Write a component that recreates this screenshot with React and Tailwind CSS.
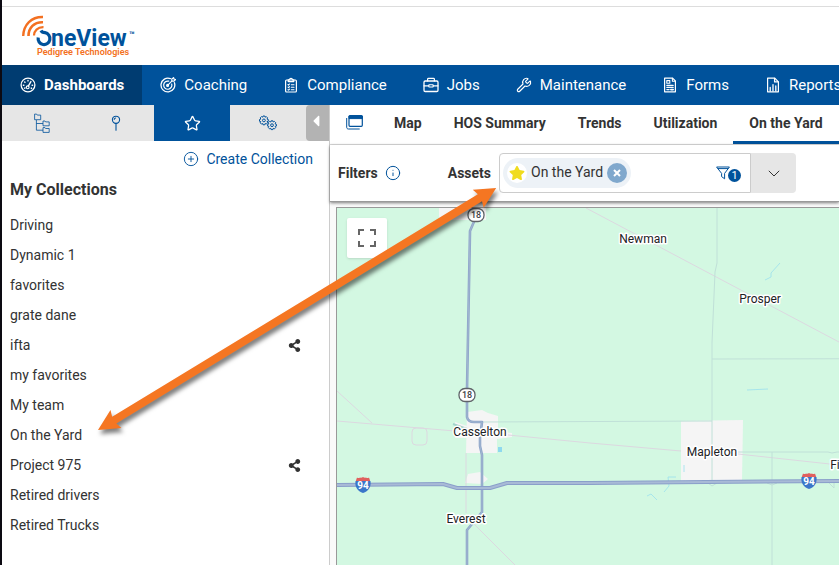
import React from 'react';
import { Star, Wrench, CirclePlus, Info } from 'lucide-react';
import { FaShareAlt, FaStar, FaCaretLeft } from 'react-icons/fa';

const Icon = ({ children, className = 'size-4' }) => (
    <svg viewBox="0 0 16 16" className={className} fill="none" stroke="currentColor" strokeWidth="1.1" strokeLinecap="round" strokeLinejoin="round" aria-hidden="true">
        {children}
    </svg>
);

const DashboardIcon = () => (
    <Icon>
        <circle cx="8" cy="8" r="6.9" strokeWidth="1.3" />
        <path d="M3.4 8.2h.5M4.7 4.9l.3.3M8 3.4v.5M12.1 8.2h.5M4.6 11.2l.4-.3M11.2 11.1l.4.3" strokeWidth="1.4" />
        <path d="M8.3 9.2l2.6-4.6" strokeWidth="1.4" />
        <circle cx="7.7" cy="10.3" r="1.4" />
    </Icon>
);

const CoachingIcon = () => (
    <Icon>
        <path d="M14.4 5.7a6.9 6.9 0 1 1-4-4.1" strokeWidth="1.3" />
        <path d="M11.7 7a4.1 4.1 0 1 1-2.9-2.8" strokeWidth="1.2" />
        <path d="M7.6 8.4l4.2-4.2M11.8 4.2V2l1.8-1.4.4 1.5 1.5.4L14 4.2z" strokeWidth="1.2" />
        <circle cx="7.6" cy="8.4" r="1" />
    </Icon>
);

const ComplianceIcon = () => (
    <Icon>
        <rect x="2.6" y="3" width="10.8" height="12" rx="1" strokeWidth="1.2" />
        <path d="M5.2 4.6V2.8h1.4a1.4 1.4 0 0 1 2.8 0h1.4v1.8z" strokeWidth="1.2" />
        <path d="M5 7.5l.6.6.9-1.1M8.3 7.7H11M5 10.1l.6.6.9-1.1M8.3 10.2H11M5 12.7l.6.4.9-.9M8.3 12.7H11" />
    </Icon>
);

const JobsIcon = () => (
    <Icon>
        <rect x="1" y="4" width="14" height="10.5" rx="1.2" strokeWidth="1.3" />
        <path d="M4.6 4V2.2c0-.5.4-.8.9-.8h5c.5 0 .9.3.9.8V4M1 8.8h4.8M10.2 8.8H15" strokeWidth="1.2" />
        <rect x="5.8" y="7.8" width="4.4" height="2.2" rx=".4" />
    </Icon>
);

const FormsIcon = () => (
    <Icon>
        <path d="M2.6 1.2h8l2.8 2.8v10.8H2.6z" strokeWidth="1.2" />
        <path d="M10.4 1.4v2.8h2.8M4.8 3.6h3v2.6h-3zM4.8 8.4h6.4M4.8 10.4h6.4M4.8 12.6h2.4" />
        <path d="M8.8 12.6h2.4" strokeWidth="1.6" />
    </Icon>
);

const ReportsIcon = () => (
    <Icon>
        <path d="M2.6 1.2h7.2l3.6 3.6v10H2.6z" strokeWidth="1.2" />
        <path d="M9.6 1.4v3.5h3.6M5.2 14v-3.6M8 14V7.6M10.8 14V9" strokeWidth="1.3" />
    </Icon>
);

const HierarchyIcon = () => (
    <svg viewBox="0 0 16 20" className="ml-1 h-5 w-4" fill="none" stroke="currentColor" strokeWidth="0.8" aria-hidden="true">
        <path d="M.6 1.1h2l.7 1h3.4v4.6H.6zM9 8h2l.6.9h3.6v3.9H9zM9 14.6h2l.6.9h3.6v3.9H9zM2.4 7v10.2H9M2.4 10.5H9" />
    </svg>
);

const PinIcon = () => (
    <Icon>
        <circle cx="8" cy="4.8" r="3.6" />
        <path d="M8 8.6v6.6M6.2 4.4c.1-.8.6-1.2 1.4-1.4" />
    </Icon>
);

const Gear = ({ x, y }) => (
    <g transform={`translate(${x} ${y})`}>
        <path d="M-.9-4.4h1.8l.3 1.2 1.2-.6 1.3 1.3-.6 1.2 1.3.4v1.8l-1.3.3.6 1.2-1.3 1.3-1.2-.6-.3 1.3H-.9l-.3-1.3-1.2.6-1.3-1.3.6-1.2-1.3-.3V-.9l1.3-.4-.6-1.2 1.3-1.3 1.2.6z" />
        <circle r="1.4" />
    </g>
);

const GearsIcon = () => (
    <svg viewBox="0 0 18 16" className="h-4 w-[18px]" fill="none" stroke="currentColor" strokeWidth="1" aria-hidden="true">
        <Gear x={4.9} y={5.4} />
        <Gear x={13} y={10.2} />
    </svg>
);

const Logo = () => (
    <svg viewBox="0 0 118 42" className="h-[42px] w-[118px]" role="img" aria-label="OneView Pedigree Technologies">
        <g fill="none" stroke="#f37021">
            <path d="M1.2 21C1.6 9.6 9.4 1.7 21 2" strokeWidth="2.4" />
            <path d="M6.5 21C6.5 13 12 6.8 21 7.2" strokeWidth="2.6" />
            <path d="M12 20.5C12 16 15.5 12 21.500 12.200" strokeWidth="2.2" />
        </g>
        <path d="M16.200 22.500A5.900 6 0 1 0 23 17.700C20.500 17.500 19.500 16.500 19 15.500" fill="none" stroke="#00529b" strokeWidth="3.2" />
        <text x="29" y="31" fontSize="23" fontWeight="700" fill="#00529b" className="font-['Roboto',sans-serif]">neView</text>
        <text x="107" y="23" fontSize="9" fontWeight="700" fill="#00529b" className="font-['Roboto',sans-serif]">™</text>
        <text x="15" y="40" fontSize="9" fontWeight="600" fill="#f37021" className="font-['Roboto',sans-serif]">Pedigree Technologies</text>
    </svg>
);

const navItems = [
    { label: 'Dashboards', icon: <DashboardIcon />, active: true },
    { label: 'Coaching', icon: <CoachingIcon /> },
    { label: 'Compliance', icon: <ComplianceIcon /> },
    { label: 'Jobs', icon: <JobsIcon /> },
    { label: 'Maintenance', icon: <Wrench className="size-4" strokeWidth={1.7} /> },
    { label: 'Forms', icon: <FormsIcon /> },
    { label: 'Reports', icon: <ReportsIcon /> },
];

const Navbar = () => (
    <nav className="flex h-10 overflow-hidden bg-[#00529b] text-white">
        {navItems.map(({ label, icon, active }) => (
            <a
                key={label}
                href="#"
                className={active
                    ? 'flex shrink-0 items-center gap-2 bg-[#003c71] px-[18px] text-[15px] font-bold'
                    : 'flex shrink-0 items-center gap-2 px-[18px] text-[15px]'}
            >
                {icon}
                {label}
            </a>
        ))}
    </nav>
);

const sideTabs = [
    { label: 'Hierarchy', icon: <HierarchyIcon /> },
    { label: 'Landmarks', icon: <PinIcon /> },
    { label: 'Collections', icon: <Star className="size-[17px]" strokeWidth={1.8} />, active: true },
    { label: 'Settings', icon: <GearsIcon /> },
];

const collections = [
    { name: 'Driving' },
    { name: 'Dynamic 1' },
    { name: 'favorites' },
    { name: 'grate dane' },
    { name: 'ifta', shared: true },
    { name: 'my favorites' },
    { name: 'My team' },
    { name: 'On the Yard' },
    { name: 'Project 975', shared: true },
    { name: 'Retired drivers' },
    { name: 'Retired Trucks' },
];

const Sidebar = () => (
    <aside className="w-[328px] shrink-0 border-r border-[#ccc]">
        <div className="flex h-9 bg-[#e6e6e6]">
            {sideTabs.map(({ label, icon, active }) => (
                <button
                    key={label}
                    type="button"
                    aria-label={label}
                    className={active
                        ? 'flex flex-1 items-center justify-center bg-[#00529b] text-white'
                        : 'flex flex-1 items-center justify-center text-[#00529b]'}
                >
                    {icon}
                </button>
            ))}
            <button type="button" aria-label="Collapse panel" className="flex w-[23px] items-center justify-center rounded-l-sm bg-[#b3b3b3] pr-1 pb-1 text-white">
                <FaCaretLeft className="size-[18px]" />
            </button>
        </div>
        <div className="flex justify-end px-4 pt-2">
            <button type="button" className="flex items-center gap-[7px] text-sm text-[#00529b]">
                <CirclePlus className="size-4" strokeWidth={1.4} />
                Create Collection
            </button>
        </div>
        <h2 className="px-2 pt-[9px] text-base font-bold">My Collections</h2>
        <ul className="px-2 pt-2">
            {collections.map(({ name, shared }) => (
                <li key={name} className="flex h-[30px] items-center justify-between pr-5 text-sm">
                    <a href="#">{name}</a>
                    {shared && <FaShareAlt className="size-[13px]" aria-label="Shared" />}
                </li>
            ))}
        </ul>
    </aside>
);

const viewTabs = ['Map', 'HOS Summary', 'Trends', 'Utilization', 'On the Yard'];

const ViewTabs = () => (
    <div className="flex h-10 overflow-hidden border-b border-[#ddd] text-sm font-bold">
        <button type="button" aria-label="Open in new window" className="flex w-12 shrink-0 items-center justify-center pb-1 text-[#00529b]">
            <svg viewBox="0 0 17 15" className="h-[15px] w-[17px]" fill="none" stroke="currentColor" aria-hidden="true">
                <rect x="3" y=".7" width="13.300" height="10.600" rx="1" strokeWidth="1.200" />
                <path d="M3 1h13.300v2.600H3z" fill="currentColor" />
                <path d="M.7 3v9.300c0 1 .6 1.700 1.700 1.700h11.300" strokeWidth="1" />
            </svg>
        </button>
        {viewTabs.map((tab) => (
            <a
                key={tab}
                href="#"
                className={tab === 'On the Yard'
                    ? 'shrink-0 border-b-[3px] border-[#00529b] px-4 pt-2'
                    : 'shrink-0 px-4 pt-2'}
            >
                {tab}
            </a>
        ))}
        <span className="flex-1 border-b-[3px] border-[#00529b]" />
    </div>
);

const FilterBar = () => (
    <div className="relative flex h-[57px] items-center border-b border-[#999] bg-white px-2 text-sm shadow-[0_1px_3px_rgba(0,0,0,0.5)]">
        <span className="font-bold">Filters</span>
        <button type="button" aria-label="About filters" className="ml-[7px] text-[#00529b]">
            <Info className="size-4" strokeWidth={1.5} />
        </button>
        <span className="mr-2 ml-[47px] font-bold">Assets</span>
        <div className="flex h-10 w-[252px] items-center justify-between rounded-l-sm border border-[#ccc] pr-1 pl-[3px]">
            <span className="flex h-[30px] items-center gap-1 rounded-full bg-[#edf2f7] px-1">
                <span className="flex size-5 items-center justify-center rounded-full bg-white">
                    <FaStar className="size-4 text-[#f0dc1e]" />
                </span>
                <span className="pb-[3px]">On the Yard</span>
                <button type="button" aria-label="Remove On the Yard" className="flex size-5 items-center justify-center rounded-full bg-[#80a8cd] text-white">
                    <svg viewBox="0 0 8 8" className="size-2" stroke="currentColor" strokeWidth="2" aria-hidden="true">
                        <path d="M1 1l6 6M7 1L1 7" />
                    </svg>
                </button>
            </span>
            <button type="button" aria-label="1 filter applied" className="relative h-5 w-[30px] text-[#00529b]">
                <svg viewBox="0 0 14 14" className="size-[14px]" fill="none" stroke="currentColor" strokeWidth="1" aria-hidden="true">
                    <path d="M.6 1h12.800L8.600 7.400V12.800L5.600 10.600V7.400zM1.600 2.600h10.800" />
                </svg>
                <span className="absolute top-1.5 left-3 flex size-[13px] items-center justify-center rounded-full bg-[#00529b] text-[11px] text-white">1</span>
            </button>
        </div>
        <button type="button" aria-label="Choose assets" className="flex h-10 w-[45px] items-center justify-center rounded-r-sm bg-[#e6e6e6]">
            <svg viewBox="0 0 12 7" className="h-[7px] w-3" fill="none" stroke="#333" aria-hidden="true">
                <path d="M.8.8L6 6 11.200.8" />
            </svg>
        </button>
    </div>
);

const towns = [
    { name: 'Newman', x: 306, y: 35 },
    { name: 'Prosper', x: 423, y: 95 },
    { name: 'Casselton', x: 143, y: 228 },
    { name: 'Everest', x: 129, y: 315 },
    { name: 'Mapleton', x: 375, y: 248 },
    { name: 'Fi', x: 498, y: 261 },
];

const StateRoute = ({ x, y }) => (
    <g transform={`translate(${x} ${y})`}>
        <rect x="-8" y="-6.500" width="16" height="13" rx="6" fill="#fff" stroke="#5f6368" strokeWidth="1.300" />
        <text y="3" textAnchor="middle" fontSize="9" fontWeight="500" fill="#3c4043">18</text>
    </g>
);

const Interstate = ({ x, y }) => (
    <g transform={`translate(${x} ${y})`}>
        <path d="M-6-7.500q1.500 1.200 3 0Q-1.500-6.800 0-8q1.500 1.200 3 .5 1.500 1.200 3 0l1.200 3.500H-7.200z" fill="#e0605e" />
        <path d="M-7.500-4h15C8.300 2 5.500 6 0 8-5.500 6-8.300 2-7.500-4z" fill="#3a76c9" />
        <text y="4" textAnchor="middle" fontSize="10" fontWeight="700" fill="#fff">94</text>
    </g>
);

const MapView = () => (
    <div className="relative mt-[5px] ml-[6px] flex-1 overflow-hidden border-t border-l border-[#999] bg-[#d3f8e2]">
        <svg className="absolute inset-0 h-full w-full" fill="none" aria-label="Map of Casselton and Mapleton">
            {/* towns */}
            <g fill="#f5f5f5">
                <path d="M102 0h47v12h-47zM130 204l15-2 6 3 10 3v15l14 2v4l-15 2v14h-31zM118 214l12 4v12h-12zM128 275l3-9 12-2 8 7-6 5z" />
                <path d="M344 213l62-1-1 61h-61z" />
            </g>
            {/* railways and small roads */}
            <g stroke="#dcd8e0">
                <path d="M0 213l118 10M171 227l82 8 91 8M401 246l101 11M249 0l253 134 400 212M0 183l35 32M129 245v60M136 315l42 42 200 200" />
                <rect x="75" y="220" width="15" height="17" rx="4" />
            </g>
            <g stroke="#c0e0d8">
                <path d="M380 0v55l-2 9-3 71v138M375 151l527-1M146 214l229-1M401 244h90l4 1 5-1h400M435 244v700" />
                <path d="M371 275l4 3 5-3M430 275l5 2 5-2M491 274l6 6v-7" />
            </g>
            {/* water */}
            <g stroke="#9adfee" strokeWidth="0.8">
                <path d="M443 55l-9 10v4l-6 3M410 182l21-1M347 257v7M339 269h-8l1 9-5 6M310 288l4-2 6 6" />
                <path d="M161 239h4v5h-4z" fill="#8ed9ee" stroke="none" />
                <path d="M116 216l14 5" stroke="#a4d3cb" strokeWidth="2" />
            </g>
            {/* highways */}
            <g strokeLinejoin="round">
                <path d="M139 9l-6 14-3 159v27q1 5 7 5h8l-2 16v8l2 9v57l-15 18v900" stroke="#8fa5cb" strokeWidth="2.600" />
                <path d="M139 9l-6 14-3 159v27q1 5 7 5h8l-2 16v8l2 9v57l-15 18v900" stroke="#a0b6cf" strokeWidth="1" />
                <path d="M0 277l106-1 14 4h33l17-5h83l249-2h500" stroke="#8a9fca" strokeWidth="4" />
                <path d="M0 277l106-1 14 4h33l17-5h83l249-2h500" stroke="#a8bad6" strokeWidth="2" />
            </g>
            <g className="font-['Roboto',sans-serif]">
                <StateRoute x={139} y={7} />
                <StateRoute x={130} y={187} />
                <Interstate x={26} y={277} />
                <Interstate x={472} y={273} />
                {towns.map(({ name, x, y }) => (
                    <text key={name} x={x} y={y} textAnchor="middle" fontSize="12" fill="#202124" stroke="#fff" strokeWidth="3" strokeLinejoin="round" paintOrder="stroke">
                        {name}
                    </text>
                ))}
            </g>
        </svg>
        <button type="button" aria-label="Toggle fullscreen" className="absolute top-[10px] left-[10px] flex size-10 items-center justify-center rounded-xs bg-white shadow">
            <svg viewBox="0 0 18 18" className="size-[18px]" fill="none" stroke="#666" strokeWidth="2" aria-hidden="true">
                <path d="M1 6V1h5M12 1h5v5M17 12v5h-5M6 17H1v-5" />
            </svg>
        </button>
    </div>
);

// Callout linking the collection in the list to the selected asset filter
const CalloutArrow = () => (
    <svg className="pointer-events-none absolute top-0 left-0 h-[565px] w-[520px] drop-shadow-[2px_4px_2px_rgba(0,0,0,0.5)]" aria-hidden="true">
        <g transform="translate(96 430) rotate(-31.300)">
            <path d="M0 0L21-10.500 19-4H447L445-10.500 466 0 445 10.500 447 4H19L21 10.500z" fill="#f57622" />
        </g>
    </svg>
);

const App = () => {
    return (
        <div className="relative flex min-h-screen flex-col overflow-hidden border-l-2 border-[#0c0a12] bg-white font-['Roboto',sans-serif] text-[#333]">
            <header className="mt-[6px] flex h-[59px] items-start border-t border-[#ddd] px-5 pt-2">
                <a href="#"><Logo /></a>
            </header>
            <Navbar />
            <div className="flex flex-1">
                <Sidebar />
                <main className="flex min-w-0 flex-1 flex-col bg-[#fafafa]">
                    <div className="bg-white">
                        <ViewTabs />
                        <FilterBar />
                    </div>
                    <MapView />
                </main>
            </div>
            <CalloutArrow />
        </div>
    );
};

export default App;
